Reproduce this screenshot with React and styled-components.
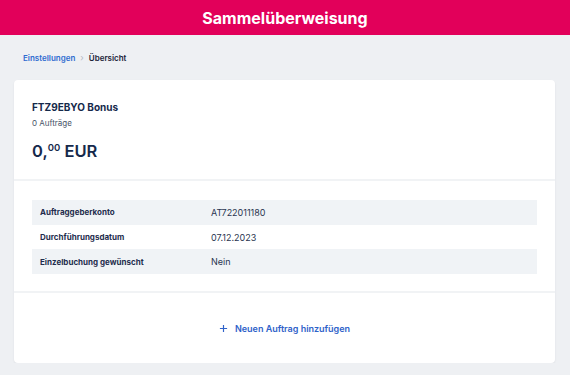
import styled, { createGlobalStyle } from "styled-components";

const GlobalStyle = createGlobalStyle`
  html, body {
    margin: 0;
    padding: 0;
    background: #eef0f3;
    font-family: Inter, "Noto Sans", sans-serif;
    color: #15294b;
  }
`;

const Header = styled.header`
  height: 35px;
  background: #e2005a;
  display: flex;
  align-items: center;
  justify-content: center;
`;

const Title = styled.h1`
  margin: 0;
  color: #fff;
  font-size: 16px;
  font-weight: 700;
`;

const Breadcrumb = styled.nav`
  display: flex;
  align-items: center;
  gap: 5px;
  height: 45px;
  padding: 0 23px;
  font-size: 8px;
  font-weight: 600;
`;

const Crumb = styled.span`
  color: ${(p) => (p.$link ? "#2f6bd0" : "#1a2338")};
`;

const Chevron = styled.span`
  color: #b3b9c4;
  font-size: 9px;
  font-weight: 400;
`;

const Card = styled.section`
  margin: 0 15px 0 14px;
  background: #fff;
  border-radius: 4px;
  box-shadow: 0 1px 2px rgba(20, 30, 50, 0.08);
`;

const Summary = styled.div`
  padding: 21px 18px 18px;
  border-bottom: 2px solid #f1f3f5;
`;

const Name = styled.div`
  font-size: 10px;
  font-weight: 700;
  color: #15294b;
`;

const Count = styled.div`
  margin-top: 5px;
  font-size: 8px;
  color: #4a5568;
`;

const Amount = styled.div`
  margin-top: 13px;
  font-size: 16.5px;
  font-weight: 600;
  color: #15294b;
  sup {
    font-size: 9.5px;
    vertical-align: 6px;
    line-height: 0;
  }
`;

const Details = styled.div`
  padding: 19px 18px 17px;
  border-bottom: 2px solid #f1f3f5;
`;

const Row = styled.div`
  display: grid;
  grid-template-columns: 171px 1fr;
  align-items: center;
  height: 24.7px;
  padding-left: 8px;
  background: ${(p) => (p.$shade ? "#f0f3f6" : "#fff")};
`;

const Label = styled.span`
  font-size: 8px;
  font-weight: 700;
  color: #1f2d4d;
`;

const Value = styled.span`
  font-size: 9px;
  color: #2a3550;
`;

const Footer = styled.div`
  height: 70px;
  display: flex;
  align-items: center;
  justify-content: center;
`;

const AddButton = styled.button`
  display: flex;
  align-items: center;
  gap: 7px;
  background: none;
  border: none;
  padding: 0;
  font-family: inherit;
  font-size: 9px;
  font-weight: 600;
  color: #2f62c9;
  cursor: pointer;
`;

const rows = [
  ["Auftraggeberkonto", "AT722011180"],
  ["Durchführungsdatum", "07.12.2023"],
  ["Einzelbuchung gewünscht", "Nein"],
];

export default function App() {
  return (
    <>
      <GlobalStyle />
      <Header>
        <Title>Sammelüberweisung</Title>
      </Header>
      <Breadcrumb>
        <Crumb $link>Einstellungen</Crumb>
        <Chevron>›</Chevron>
        <Crumb>Übersicht</Crumb>
      </Breadcrumb>
      <Card>
        <Summary>
          <Name>FTZ9EBYO Bonus</Name>
          <Count>0 Aufträge</Count>
          <Amount>
            0,<sup>00</sup> EUR
          </Amount>
        </Summary>
        <Details>
          {rows.map(([label, value], i) => (
            <Row key={label} $shade={i % 2 === 0}>
              <Label>{label}</Label>
              <Value>{value}</Value>
            </Row>
          ))}
        </Details>
        <Footer>
          <AddButton>
            <svg width="9" height="9" viewBox="0 0 10 10">
              <path d="M5 1v8M1 5h8" stroke="#2f62c9" strokeWidth="1.3" />
            </svg>
            Neuen Auftrag hinzufügen
          </AddButton>
        </Footer>
      </Card>
    </>
  );
}
